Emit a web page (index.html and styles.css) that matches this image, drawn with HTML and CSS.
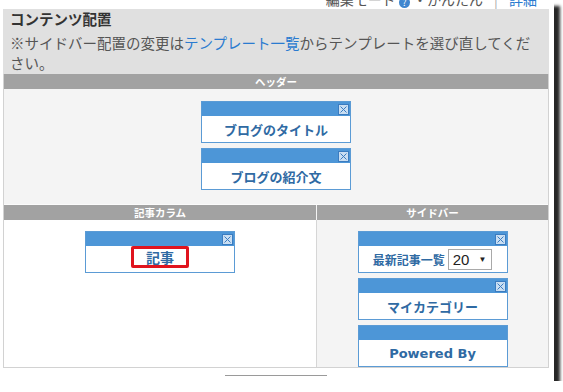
FILE: index.html
```html
<!DOCTYPE html>
<html lang="ja">
<head>
    <meta charset="UTF-8">
    <title>コンテンツ配置</title>
    <link rel="stylesheet" href="styles.css">
</head>
<body>
<div class="screen">
    <div class="topbar">
        <div class="mode">編集モード <span class="help">?</span> ・かんたん <span class="sep">|</span> <a class="link" href="#">詳細</a></div>
    </div>
    <div class="panel">
        <div class="intro">
            <h2 class="title">コンテンツ配置</h2>
            <p class="note">※サイドバー配置の変更は<a href="#">テンプレート一覧</a>からテンプレートを選び直してください。</p>
        </div>
        <div class="layout">
            <div class="sec-head">ヘッダー</div>
            <div class="sec-body header-area">
                <div class="widget">
                    <div class="widget-bar"><svg class="close" viewBox="0 0 11 11"><rect x="0.5" y="0.5" width="10" height="10" fill="#c9def2" stroke="#3b7cc0"/><path d="M2.5 2.5L8.5 8.5M8.5 2.5L2.5 8.5" stroke="#3b7cc0" stroke-width="1"/></svg></div>
                    <div class="widget-body">ブログのタイトル</div>
                </div>
                <div class="widget">
                    <div class="widget-bar"><svg class="close" viewBox="0 0 11 11"><rect x="0.5" y="0.5" width="10" height="10" fill="#c9def2" stroke="#3b7cc0"/><path d="M2.5 2.5L8.5 8.5M8.5 2.5L2.5 8.5" stroke="#3b7cc0" stroke-width="1"/></svg></div>
                    <div class="widget-body">ブログの紹介文</div>
                </div>
            </div>
            <div class="cols">
                <div class="col main">
                    <div class="sec-head">記事カラム</div>
                    <div class="sec-body">
                        <div class="widget">
                            <div class="widget-bar"><svg class="close" viewBox="0 0 11 11"><rect x="0.5" y="0.5" width="10" height="10" fill="#c9def2" stroke="#3b7cc0"/><path d="M2.5 2.5L8.5 8.5M8.5 2.5L2.5 8.5" stroke="#3b7cc0" stroke-width="1"/></svg></div>
                            <div class="widget-body"><span class="mark">記事</span></div>
                        </div>
                    </div>
                </div>
                <div class="col side">
                    <div class="sec-head">サイドバー</div>
                    <div class="sec-body">
                        <div class="widget">
                            <div class="widget-bar"><svg class="close" viewBox="0 0 11 11"><rect x="0.5" y="0.5" width="10" height="10" fill="#c9def2" stroke="#3b7cc0"/><path d="M2.5 2.5L8.5 8.5M8.5 2.5L2.5 8.5" stroke="#3b7cc0" stroke-width="1"/></svg></div>
                            <div class="widget-body small">最新記事一覧 <span class="select">20 <i>▼</i></span></div>
                        </div>
                        <div class="widget">
                            <div class="widget-bar"><svg class="close" viewBox="0 0 11 11"><rect x="0.5" y="0.5" width="10" height="10" fill="#c9def2" stroke="#3b7cc0"/><path d="M2.5 2.5L8.5 8.5M8.5 2.5L2.5 8.5" stroke="#3b7cc0" stroke-width="1"/></svg></div>
                            <div class="widget-body">マイカテゴリー</div>
                        </div>
                        <div class="widget">
                            <div class="widget-bar"></div>
                            <div class="widget-body latin">Powered By</div>
                        </div>
                    </div>
                </div>
            </div>
        </div>
    </div>
    <div class="scroll-line"></div>
</div>
</body>
</html>
```

FILE: styles.css
```css
body{
    margin: 0;
    padding: 0;
    background: #fff;
    font-family: "Noto Sans CJK JP", "Noto Sans", sans-serif;
}
.screen{
    width: 554px;
    height: 381px;
    background: #fff;
    box-shadow: 6px 6px 3px #262626;
    overflow: hidden;
}
.topbar{
    height: 9px;
    overflow: hidden;
}
.mode{
    margin-top: -11px;
    padding-right: 17px;
    line-height: 20px;
    font-size: 14px;
    color: #555;
    text-align: right;
    white-space: nowrap;
}
.help{
    display: inline-block;
    width: 11px;
    height: 11px;
    border-radius: 50%;
    background: #3f86cf;
    color: #fff;
    font-size: 9px;
    line-height: 11px;
    text-align: center;
    vertical-align: -1px;
}
.sep{
    color: #aaa;
    margin: 0 8px;
}
.link{
    color: #2a7bd0;
    text-decoration: none;
}
.panel{
    margin: 0 5px 0 3px;
    background: #e0e0e0;
}
.intro{
    padding: 0 10px 1px 7px;
}
.title{
    margin: 0 0 4px;
    font-size: 14.5px;
    line-height: 20px;
    font-weight: bold;
    color: #333;
}
.note{
    margin: 0;
    font-size: 14.5px;
    line-height: 20px;
    color: #555;
}
.note a{
    color: #2a7bd0;
    text-decoration: none;
}
.layout{
    border: 1px solid #d2d2d2;
    border-top: 0;
    background: #f4f4f4;
}
.sec-head{
    height: 15px;
    line-height: 15px;
    background: #a2a2a2;
    color: #fff;
    font-size: 10.5px;
    font-weight: bold;
    text-align: center;
}
.sec-body{
    display: flex;
    flex-direction: column;
    align-items: center;
    gap: 5px;
}
.header-area{
    padding: 12px 0 14px;
}
.cols{
    display: grid;
    grid-template-columns: 312px 1fr;
    border-top: 1px solid #fbfbfb;
}
.col .sec-body{
    padding-top: 11px;
    height: 136px;
}
.main .sec-body{
    background: #fff;
}
.side{
    border-left: 1px solid #d6d6d6;
}
.side .sec-head{
    border-left: 1px solid #f4f4f4;
    margin-left: -1px;
}
.widget{
    width: 148px;
    border: 1px solid #5b9bd5;
    background: #fff;
}
.widget-bar{
    height: 14px;
    background: #4d96d7;
    display: flex;
    justify-content: flex-end;
    align-items: center;
    padding-right: 1px;
}
.close{
    width: 11px;
    height: 11px;
}
.widget-body{
    height: 26px;
    display: flex;
    align-items: center;
    justify-content: center;
    gap: 3px;
    font-size: 13px;
    font-weight: bold;
    color: #2f6aa3;
}
.widget-body.small{
    font-size: 12px;
}
.widget-body.latin{
    font-family: "DejaVu Sans", sans-serif;
    font-size: 13px;
}
.mark{
    margin-top: -4px;
    padding: 0 12px;
    height: 16px;
    line-height: 16px;
    border: 3px solid #e0141e;
    border-radius: 2px;
    font-size: 14px;
}
.select{
    display: flex;
    align-items: center;
    gap: 9px;
    height: 19px;
    padding: 0 5px 0 4px;
    border: 1px solid #a9a9a9;
    background: #fff;
    font-family: "Liberation Sans", sans-serif;
    font-size: 15px;
    font-weight: normal;
    color: #222;
}
.select i{
    font-style: normal;
    font-size: 8px;
}
.scroll-line{
    margin: 7px 0 0 225px;
    width: 102px;
    border-top: 1px solid #9a9a9a;
}
```
